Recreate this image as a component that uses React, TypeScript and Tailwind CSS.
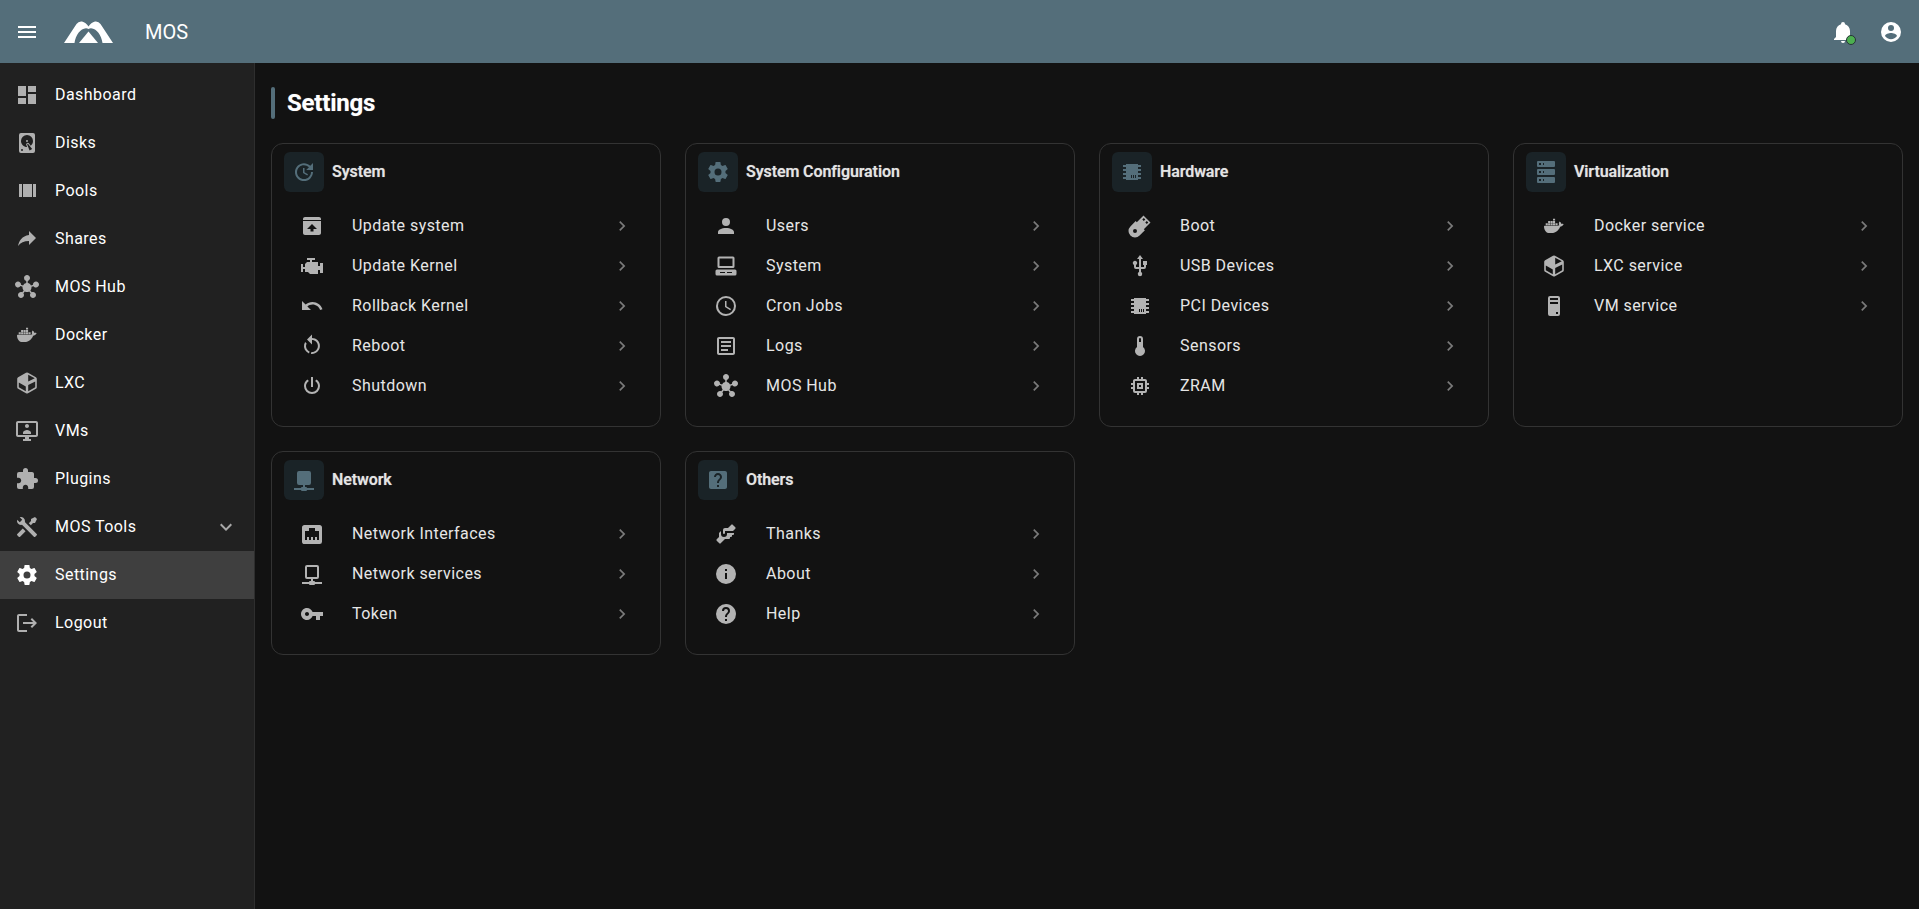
import { MdHub } from "react-icons/md";

const P = {
  menu: "M3,6H21V8H3V6M3,11H21V13H3V11M3,16H21V18H3V16Z",
  dashboard: "M13,3V9H21V3M13,21H21V11H13M3,21H11V15H3M3,13H11V3H3V13Z",
  disk: "M6,2H18A2,2 0 0,1 20,4V20A2,2 0 0,1 18,22H6A2,2 0 0,1 4,20V4A2,2 0 0,1 6,2M12,4A6,6 0 0,0 6,10C6,13.31 8.69,16 12.1,16L11.22,13.77C10.95,13.29 11.11,12.68 11.59,12.4L12.45,11.9C12.93,11.63 13.54,11.79 13.82,12.27L15.74,14.69C17.12,13.59 18,11.9 18,10A6,6 0 0,0 12,4M12,9A1,1 0 0,1 13,10A1,1 0 0,1 12,11A1,1 0 0,1 11,10A1,1 0 0,1 12,9M7,18A1,1 0 0,0 6,19A1,1 0 0,0 7,20A1,1 0 0,0 8,19A1,1 0 0,0 7,18M12.09,13.27L14.58,19.58L17.17,18.08L12.95,12.77L12.09,13.27Z",
  pools: "M8,18H17V5H8M18,5V18H21V5M4,18H7V5H4V18Z",
  share: "M21,11L14,4V8C7,9 4,14 3,19C5.5,15.5 9,13.9 14,13.9V18L21,11Z",
  docker: "M21.81 10.25C21.75 10.21 21.25 9.82 20.17 9.82C19.89 9.82 19.61 9.85 19.33 9.9C19.12 8.5 17.95 7.79 17.9 7.76L17.61 7.59L17.42 7.86C17.18 8.24 17 8.66 16.89 9.1C16.7 9.9 16.82 10.65 17.23 11.3C16.74 11.57 15.95 11.64 15.79 11.65H2.62C2.28 11.65 2 11.93 2 12.27C2 13.41 2.18 14.55 2.57 15.62C3 16.79 3.67 17.66 4.5 18.19C5.46 18.77 7 19.11 8.79 19.11C9.56 19.11 10.32 19.04 11.08 18.9C12.13 18.71 13.14 18.34 14.08 17.81C14.85 17.36 15.54 16.79 16.13 16.12C17.11 15 17.69 13.76 18.12 12.65H18.29C19.37 12.65 20.03 12.22 20.4 11.85C20.65 11.61 20.84 11.32 20.97 11L21.05 10.76L21.81 10.25M3.7 9.3H5.8V11.25H3.7V9.3M6.1 9.3H8.2V11.25H6.1V9.3M8.6 9.3H10.7V11.25H8.6V9.3M11 9.3H13.1V11.25H11V9.3M13.5 9.3H15.6V11.25H13.5V9.3M6.1 7H8.2V8.95H6.1V7M8.6 7H10.7V8.95H8.6V7M11 7H13.1V8.95H11V7M11 4.7H13.1V6.6H11V4.7Z",
  lxc: "M12 1.5Q12.6 1.5 13 1.8L20.9 6.2Q21.8 6.7 21.8 7.7V16.3Q21.8 17.3 20.9 17.8L13 22.2Q12 22.7 11 22.2L3.1 17.8Q2.2 17.3 2.2 16.3V7.7Q2.2 6.7 3.1 6.2L11 1.8Q11.4 1.5 12 1.5ZM13.2 3.8V10.6L19.8 7.2L13.2 3.8ZM13.2 14V20.2L20.2 16.2V10.4L13.2 14ZM3.8 11.6V16.2L10.8 20.2V15.6L3.8 11.6Z",
  vms: "M21 2H3C1.9 2 1 2.9 1 4V16C1 17.1 1.9 18 3 18H10V20H8V22H16V20H14V18H21C22.1 18 23 17.1 23 16V4C23 2.9 22.1 2 21 2M21 16H3V4H21V16M12 5C13.1 5 14 5.9 14 7S13.1 9 12 9 10 8.1 10 7 10.9 5 12 5M16 15H8V13.5C8 12 10.67 11 12 11S16 12 16 13.5V15Z",
  puzzle: "M20.5,11H19V7C19,5.89 18.1,5 17,5H13V3.5A2.5,2.5 0 0,0 10.5,1A2.5,2.5 0 0,0 8,3.5V5H4A2,2 0 0,0 2,7V10.8H3.5C5,10.8 6.2,12 6.2,13.5C6.2,15 5,16.2 3.5,16.2H2V20A2,2 0 0,0 4,22H7.8V20.5C7.8,19 9,17.8 10.5,17.8C12,17.8 13.2,19 13.2,20.5V22H17A2,2 0 0,0 19,20V16H20.5A2.5,2.5 0 0,0 23,13.5A2.5,2.5 0 0,0 20.5,11Z",
  tools: "M21.71 20.29L20.29 21.71A1 1 0 0 1 18.88 21.71L7 9.85A3.81 3.81 0 0 1 6 10A4 4 0 0 1 2.22 4.7L4.76 7.24L5.29 6.71L6.71 5.29L7.24 4.76L4.7 2.22A4 4 0 0 1 10 6A3.81 3.81 0 0 1 9.85 7L21.71 18.88A1 1 0 0 1 21.71 20.29M2.29 18.88A1 1 0 0 0 2.29 20.29L3.71 21.71A1 1 0 0 0 5.12 21.71L10.59 16.25L7.76 13.42M20 2L16 4V6L13.83 8.17L15.83 10.17L18 8H20L22 4Z",
  cog: "M12,15.5A3.5,3.5 0 0,1 8.5,12A3.5,3.5 0 0,1 12,8.5A3.5,3.5 0 0,1 15.5,12A3.5,3.5 0 0,1 12,15.5M19.43,12.97C19.47,12.65 19.5,12.33 19.5,12C19.5,11.67 19.47,11.34 19.43,11L21.54,9.37C21.73,9.22 21.78,8.95 21.66,8.73L19.66,5.27C19.54,5.05 19.27,4.96 19.05,5.05L16.56,6.05C16.04,5.66 15.5,5.32 14.87,5.07L14.5,2.42C14.46,2.18 14.25,2 14,2H10C9.75,2 9.54,2.18 9.5,2.42L9.13,5.07C8.5,5.32 7.96,5.66 7.44,6.05L4.95,5.05C4.73,4.96 4.46,5.05 4.34,5.27L2.34,8.73C2.21,8.95 2.27,9.22 2.46,9.37L4.57,11C4.53,11.34 4.5,11.67 4.5,12C4.5,12.33 4.53,12.65 4.57,12.97L2.46,14.63C2.27,14.78 2.21,15.05 2.34,15.27L4.34,18.73C4.46,18.95 4.73,19.03 4.95,18.95L7.44,17.94C7.96,18.34 8.5,18.68 9.13,18.93L9.5,21.58C9.54,21.82 9.75,22 10,22H14C14.25,22 14.46,21.82 14.5,21.58L14.87,18.93C15.5,18.67 16.04,18.34 16.56,17.94L19.05,18.95C19.27,19.03 19.54,18.95 19.66,18.73L21.66,15.27C21.78,15.05 21.73,14.78 21.54,14.63L19.43,12.97Z",
  logout: "M17 7L15.59 8.41L18.17 11H8V13H18.17L15.59 15.58L17 17L22 12M4 5H12V3H4C2.9 3 2 3.9 2 5V19C2 20.1 2.9 21 4 21H12V19H4V5Z",
  chevronRight: "M8.59,16.58L13.17,12L8.59,7.41L10,6L16,12L10,18L8.59,16.58Z",
  chevronDown: "M7.41,8.58L12,13.17L16.59,8.58L18,10L12,16L6,10L7.41,8.58Z",
  bell: "M21,19V20H3V19L5,17V11C5,7.9 7.03,5.17 10,4.29C10,4.19 10,4.1 10,4A2,2 0 0,1 12,2A2,2 0 0,1 14,4C14,4.1 14,4.19 14,4.29C16.97,5.17 19,7.9 19,11V17L21,19M14,21A2,2 0 0,1 12,23A2,2 0 0,1 10,21",
  accountCircle: "M12,19.2C9.5,19.2 7.29,17.92 6,16C6.03,14 10,12.9 12,12.9C14,12.9 17.97,14 18,16C16.71,17.92 14.5,19.2 12,19.2M12,5A3,3 0 0,1 15,8A3,3 0 0,1 12,11A3,3 0 0,1 9,8A3,3 0 0,1 12,5M12,2A10,10 0 0,0 2,12A10,10 0 0,0 12,22A10,10 0 0,0 22,12A10,10 0 0,0 12,2Z",
  update: "M21,10.12H14.22L16.96,7.3C14.23,4.6 9.81,4.5 7.08,7.2C4.35,9.91 4.35,14.28 7.08,17C9.81,19.7 14.23,19.7 16.96,17C18.32,15.65 19,14.08 19,12.1H21C21,14.08 20.12,16.65 18.36,18.39C14.85,21.87 9.15,21.87 5.64,18.39C2.14,14.92 2.11,9.28 5.62,5.81C9.13,2.34 14.76,2.34 18.27,5.81L21,3V10.12M12.5,8V12.25L16,14.33L15.28,15.54L11,13V8H12.5Z",
  packageUp: "M5 3H19C20.1 3 21 3.9 21 5V6H3V5C3 3.9 3.9 3 5 3ZM3 7H21V19C21 20.1 20.1 21 19 21H5C3.9 21 3 20.1 3 19V7M12 10L7 15H10.5V17.5H13.5V15H17L12 10Z",
  engine: "M7,4V6H10V8H7L5,10V13H3V10H1V18H3V15H5V18H8L10,20H18V16H20V19H23V9H20V12H18V8H12V6H15V4H7Z",
  undo: "M12.5,8C9.85,8 7.45,9 5.6,10.6L2,7V16H11L7.38,12.38C8.77,11.22 10.54,10.5 12.5,10.5C16.04,10.5 19.05,12.81 20.1,16L22.47,15.22C21.08,11.03 17.15,8 12.5,8Z",
  restart: "M12,4C14.1,4 16.1,4.8 17.6,6.3C20.7,9.4 20.7,14.5 17.6,17.6C15.8,19.5 13.3,20.2 10.9,19.9L11.4,17.9C13.1,18.1 14.9,17.5 16.2,16.2C18.5,13.9 18.5,10.1 16.2,7.7C15.1,6.6 13.5,6 12,6V10.6L7,5.6L12,0.6V4M6.3,17.6C3.7,15 3.3,11 5.1,7.9L6.6,9.4C5.5,11.6 5.9,14.4 7.8,16.2C8.3,16.7 8.9,17.1 9.6,17.4L9,19.4C8,19 7.1,18.4 6.3,17.6Z",
  power: "M16.56,5.44L15.11,6.89C16.84,7.94 18,9.83 18,12A6,6 0 0,1 12,18A6,6 0 0,1 6,12C6,9.83 7.16,7.94 8.88,6.88L7.44,5.44C5.36,6.88 4,9.28 4,12A8,8 0 0,0 12,20A8,8 0 0,0 20,12C20,9.28 18.64,6.88 16.56,5.44M13,3H11V13H13",
  account: "M12,4A4,4 0 0,1 16,8A4,4 0 0,1 12,12A4,4 0 0,1 8,8A4,4 0 0,1 12,4M12,14C16.42,14 20,15.79 20,18V20H4V18C4,15.79 7.58,14 12,14Z",
  desktop: "M5 2.5H19A1.5 1.5 0 0 1 20.5 4V12.5A1.5 1.5 0 0 1 19 14H5A1.5 1.5 0 0 1 3.5 12.5V4A1.5 1.5 0 0 1 5 2.5ZM5.5 4.5V12H18.5V4.5H5.5ZM3 15.5H21A1.5 1.5 0 0 1 22.5 17V20A1.5 1.5 0 0 1 21 21.5H3A1.5 1.5 0 0 1 1.5 20V17A1.5 1.5 0 0 1 3 15.5ZM6 18V19H11V18H6ZM13 18V19H18V18H13Z",
  clock: "M12,20A8,8 0 0,0 20,12A8,8 0 0,0 12,4A8,8 0 0,0 4,12A8,8 0 0,0 12,20M12,2A10,10 0 0,1 22,12A10,10 0 0,1 12,22C6.47,22 2,17.5 2,12A10,10 0 0,1 12,2M12.5,7V12.25L17,14.92L16.25,16.15L11,13V7H12.5Z",
  logs: "M5,3C3.89,3 3,3.89 3,5V19C3,20.11 3.89,21 5,21H19C20.11,21 21,20.11 21,19V5C21,3.89 20.11,3 19,3H5M5,5H19V19H5V5M7,7V9H17V7H7M7,11V13H17V11H7M7,15V17H14V15H7Z",
  chip: "M6,4H18V5H21V7H18V9H21V11H18V13H21V15H18V17H21V19H18V20H6V19H3V17H6V15H3V13H6V11H3V9H6V7H3V5H6V4M11,15V18H12V15H11M13,15V18H14V15H13M15,15V18H16V15H15Z",
  usb: "M15,7V11H16V13H13V5H15L12,1L9,5H11V13H8V10.93C8.7,10.56 9.2,9.85 9.2,9C9.2,7.78 8.21,6.8 7,6.8C5.78,6.8 4.8,7.78 4.8,9C4.8,9.85 5.3,10.56 6,10.93V13A2,2 0 0,0 8,15H11V18.05C10.29,18.41 9.8,19.15 9.8,20A2.2,2.2 0 0,0 12,22.2A2.2,2.2 0 0,0 14.2,20C14.2,19.15 13.71,18.41 13,18.05V15H16A2,2 0 0,0 18,13V11H19V7H15Z",
  thermometer: "M15 13V5A3 3 0 0 0 9 5V13A5 5 0 1 0 15 13M12 4A1 1 0 0 1 13 5V8H11V5A1 1 0 0 1 12 4Z",
  memory: "M17,17H7V7H17M21,11V9H19V7C19,5.89 18.1,5 17,5H15V3H13V5H11V3H9V5H7C5.89,5 5,5.89 5,7V9H3V11H5V13H3V15H5V17A2,2 0 0,0 7,19H9V21H11V19H13V21H15V19H17A2,2 0 0,0 19,17V15H21V13H19V11M13,13H11V11H13M15,9H9V15H15V9Z",
  usbFlash: "M2.4 12.4L7.7 7.1L8.8 8.2L15.5 1.5L22.5 8.5L15.8 15.2L16.9 16.3L11.6 21.6A6.5 6.5 0 0 1 2.4 12.4ZM7 15A2 2 0 0 0 7 19A2 2 0 0 0 7 15ZM15.8 4L14.3 5.5L15.8 7L17.3 5.5L15.8 4ZM18.8 7L17.3 8.5L18.8 10L20.3 8.5L18.8 7Z",
  server: "M4,1H20A1,1 0 0,1 21,2V6A1,1 0 0,1 20,7H4A1,1 0 0,1 3,6V2A1,1 0 0,1 4,1M4,9H20A1,1 0 0,1 21,10V14A1,1 0 0,1 20,15H4A1,1 0 0,1 3,14V10A1,1 0 0,1 4,9M4,17H20A1,1 0 0,1 21,18V22A1,1 0 0,1 20,23H4A1,1 0 0,1 3,22V18A1,1 0 0,1 4,17M9,5H10V3H9V5M9,13H10V11H9V13M9,21H10V19H9V21M5,3V5H7V3H5M5,11V13H7V11H5M5,19V21H7V19H5Z",
  tower: "M8,2H16A2,2 0 0,1 18,4V20A2,2 0 0,1 16,22H8A2,2 0 0,1 6,20V4A2,2 0 0,1 8,2M8,4V6H16V4H8M16,8H8V10H16V8M16,18H14V20H16V18Z",
  network: "M15,20A1,1 0 0,0 14,19H13V17H17A2,2 0 0,0 19,15V5A2,2 0 0,0 17,3H7A2,2 0 0,0 5,5V15A2,2 0 0,0 7,17H11V19H10A1,1 0 0,0 9,20H2V22H9A1,1 0 0,0 10,23H14A1,1 0 0,0 15,22H22V20H15Z",
  networkOutline: "M15,20A1,1 0 0,0 14,19H13V17H17A2,2 0 0,0 19,15V5A2,2 0 0,0 17,3H7A2,2 0 0,0 5,5V15A2,2 0 0,0 7,17H11V19H10A1,1 0 0,0 9,20H2V22H9A1,1 0 0,0 10,23H14A1,1 0 0,0 15,22H22V20H15M7,15V5H17V15H7Z",
  ethernet: "M7,15H9V18H11V15H13V18H15V15H17V18H19V9H15V6H9V9H5V18H7V15M4.38,3H19.63C20.94,3 22,4.06 22,5.38V19.63A2.37,2.37 0 0,1 19.63,22H4.38C3.06,22 2,20.94 2,19.63V5.38C2,4.06 3.06,3 4.38,3Z",
  key: "M7 14C5.9 14 5 13.1 5 12S5.9 10 7 10 9 10.9 9 12 8.1 14 7 14M12.6 10C11.8 7.7 9.6 6 7 6C3.7 6 1 8.7 1 12S3.7 18 7 18C9.6 18 11.8 16.3 12.6 14H16V18H20V14H23V10H12.6Z",
  helpBox: "M19 3H5C3.89 3 3 3.89 3 5V19C3 20.1 3.9 21 5 21H19C20.1 21 21 20.1 21 19V5C21 3.89 20.1 3 19 3M13 19H11V17H13V19M15.07 11.25L14.17 12.17C13.45 12.89 13 13.5 13 15H11V14.5C11 13.39 11.45 12.39 12.17 11.67L13.41 10.41C13.78 10.05 14 9.55 14 9C14 7.89 13.1 7 12 7S10 7.89 10 9H8C8 6.79 9.79 5 12 5S16 6.79 16 9C16 9.88 15.64 10.67 15.07 11.25Z",
  handshake: "M11 6H14L17.29 2.7A1 1 0 0 1 18.71 2.7L21.29 5.29A1 1 0 0 1 21.29 6.7L19 9H11V11A1 1 0 0 1 10 12A1 1 0 0 1 9 11V8A2 2 0 0 1 11 6M5 11V15L2.71 17.29A1 1 0 0 0 2.71 18.7L5.29 21.29A1 1 0 0 0 6.71 21.29L11 17H15A1 1 0 0 0 16 16V15H17A1 1 0 0 0 18 14V13H19A1 1 0 0 0 20 12V11H13V12A3 3 0 0 1 10 15A3 3 0 0 1 7 12V9Z",
  info: "M13,9H11V7H13M13,17H11V11H13M12,2A10,10 0 0,0 2,12A10,10 0 0,0 12,22A10,10 0 0,0 22,12A10,10 0 0,0 12,2Z",
  help: "M15.07,11.25L14.17,12.17C13.45,12.89 13,13.5 13,15H11V14.5C11,13.39 11.45,12.39 12.17,11.67L13.41,10.41C13.78,10.05 14,9.55 14,9C14,7.89 13.1,7 12,7A2,2 0 0,0 10,9H8A4,4 0 0,1 12,5A4,4 0 0,1 16,9C16,9.88 15.64,10.67 15.07,11.25M13,19H11V17H13M12,2A10,10 0 0,0 2,12A10,10 0 0,0 12,22A10,10 0 0,0 22,12C22,6.47 17.5,2 12,2Z",
};

type IconName = keyof typeof P | "hub";

function Icon({ name, className }: { name: IconName; className?: string }) {
  if (name === "hub") return <MdHub className={className} />;
  return (
    <svg viewBox="0 0 24 24" fill="currentColor" fillRule="evenodd" className={className}>
      <path d={P[name]} />
    </svg>
  );
}

const NAV: { label: string; icon: IconName; active?: boolean; expand?: boolean }[] = [
  { label: "Dashboard", icon: "dashboard" },
  { label: "Disks", icon: "disk" },
  { label: "Pools", icon: "pools" },
  { label: "Shares", icon: "share" },
  { label: "MOS Hub", icon: "hub" },
  { label: "Docker", icon: "docker" },
  { label: "LXC", icon: "lxc" },
  { label: "VMs", icon: "vms" },
  { label: "Plugins", icon: "puzzle" },
  { label: "MOS Tools", icon: "tools", expand: true },
  { label: "Settings", icon: "cog", active: true },
  { label: "Logout", icon: "logout" },
];

const CARDS: { title: string; icon: IconName; items: [string, IconName][] }[] = [
  {
    title: "System",
    icon: "update",
    items: [
      ["Update system", "packageUp"],
      ["Update Kernel", "engine"],
      ["Rollback Kernel", "undo"],
      ["Reboot", "restart"],
      ["Shutdown", "power"],
    ],
  },
  {
    title: "System Configuration",
    icon: "cog",
    items: [
      ["Users", "account"],
      ["System", "desktop"],
      ["Cron Jobs", "clock"],
      ["Logs", "logs"],
      ["MOS Hub", "hub"],
    ],
  },
  {
    title: "Hardware",
    icon: "chip",
    items: [
      ["Boot", "usbFlash"],
      ["USB Devices", "usb"],
      ["PCI Devices", "chip"],
      ["Sensors", "thermometer"],
      ["ZRAM", "memory"],
    ],
  },
  {
    title: "Virtualization",
    icon: "server",
    items: [
      ["Docker service", "docker"],
      ["LXC service", "lxc"],
      ["VM service", "tower"],
    ],
  },
  {
    title: "Network",
    icon: "network",
    items: [
      ["Network Interfaces", "ethernet"],
      ["Network services", "networkOutline"],
      ["Token", "key"],
    ],
  },
  {
    title: "Others",
    icon: "helpBox",
    items: [
      ["Thanks", "handshake"],
      ["About", "info"],
      ["Help", "help"],
    ],
  },
];

function Logo() {
  return (
    <svg viewBox="0 0 49 22" fill="white" className="h-[22px] w-[49px]">
      <path d="M0 22L12.5 3Q14.5 0 18 0.5Q22 1.5 24.5 5.5Q27 1.5 31 0.5Q34.5 0 36.5 3L49 22H38.5C37.5 14 32.5 7.5 27 7.2Q25.5 7.2 24.5 8Q23.5 7.2 22 7.2C16.5 7.5 11.5 14 10.5 22Z" />
      <path d="M24.5 10.5L34 22H15Z" />
    </svg>
  );
}

function Card({ title, icon, items }: (typeof CARDS)[number]) {
  return (
    <section className="rounded-xl border border-[#333333] px-3 pt-2 pb-5">
      <div className="flex items-center gap-2">
        <div className="flex size-10 items-center justify-center rounded-md bg-[#1a2327]">
          <Icon name={icon} className="size-6 text-[#546e7a]" />
        </div>
        <h2 className="text-base font-semibold tracking-[-0.1px] text-[#e4e4e4] [text-shadow:0_0_1px_rgba(255,255,255,0.4)]">{title}</h2>
      </div>
      <ul className="mt-[14px] px-4">
        {items.map(([label, ic]) => (
          <li key={label} className="flex h-10 items-center">
            <Icon name={ic} className="size-6 shrink-0 text-[#b3b3b3]" />
            <span className="ml-7 flex-1 text-base tracking-[0.45px] text-[#e6e6e6]">{label}</span>
            <Icon name="chevronRight" className="size-5 text-[#7a7a7a]" />
          </li>
        ))}
      </ul>
    </section>
  );
}

export default function App() {
  return (
    <div className="flex h-[909px] w-[1919px] flex-col overflow-hidden bg-[#121212] font-['Roboto',sans-serif] text-white">
      <header className="flex h-[63px] shrink-0 items-center bg-[#546e7a] pr-4 pl-[15px]">
        <Icon name="menu" className="size-6 text-white" />
        <div className="ml-[25px]">
          <Logo />
        </div>
        <span className="ml-8 text-xl">MOS</span>
        <div className="ml-auto flex items-center gap-6">
          <div className="relative size-6">
            <Icon name="bell" className="size-6 text-white" />
            <span className="absolute top-[15px] right-[-1px] size-[10px] rounded-full border border-[#263238] bg-[#4caf50]" />
          </div>
          <Icon name="accountCircle" className="size-6 text-white" />
        </div>
      </header>
      <div className="flex min-h-0 flex-1">
        <nav className="w-[255px] shrink-0 border-r border-[#2e2e2e] bg-[#212121] pt-2">
          {NAV.map((n) => (
            <div key={n.label} className={`flex h-12 items-center pr-4 pl-[15px] ${n.active ? "bg-[#3f3f3f]" : ""}`}>
              <Icon name={n.icon} className={`size-6 shrink-0 ${n.active ? "text-white" : "text-[#b0b0b0]"}`} />
              <span className="ml-4 flex-1 text-base tracking-[0.45px] text-white">{n.label}</span>
              {n.expand && <Icon name="chevronDown" className="size-6 text-[#a8a8a8]" />}
            </div>
          ))}
        </nav>
        <main className="flex-1 px-4 pt-6">
          <div className="flex h-8 items-center">
            <div className="h-8 w-1 rounded-sm bg-[#546e7a]" />
            <h1 className="ml-3 text-2xl font-bold tracking-[-0.2px] [text-shadow:0_0_1px_rgba(255,255,255,0.4)]">Settings</h1>
          </div>
          <div className="mt-6 grid grid-cols-[repeat(4,390px)] gap-6">
            {CARDS.map((c) => (
              <Card key={c.title} {...c} />
            ))}
          </div>
        </main>
      </div>
    </div>
  );
}
